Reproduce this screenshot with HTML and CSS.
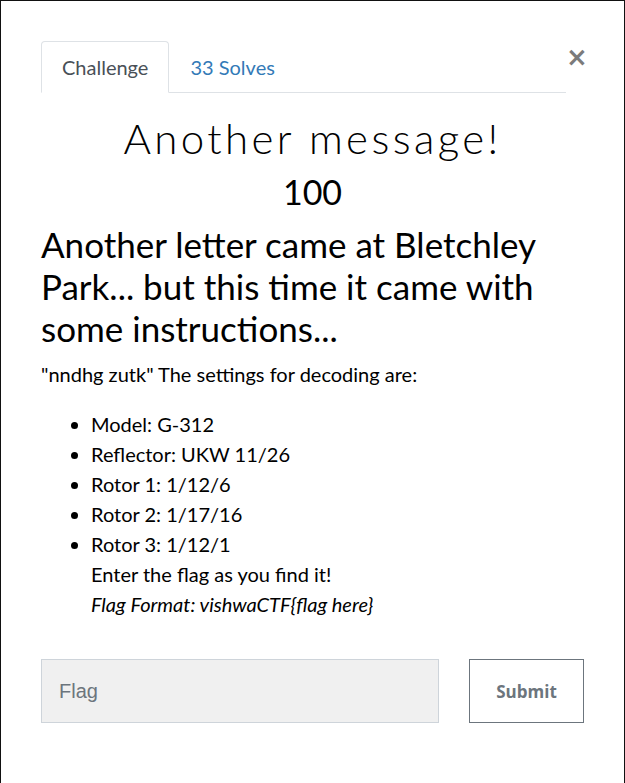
FILE: index.html
```html
<!DOCTYPE html>
<html>
<head>
<meta charset="utf-8">
<link rel="stylesheet" href="styles.css">
</head>
<body>
<div class="modal">
  <div class="header">
    <nav class="tabs">
      <a class="tab active">Challenge</a>
      <a class="tab">33 Solves</a>
    </nav>
    <span class="close">&times;</span>
  </div>
  <h2 class="title">Another message!</h2>
  <h3 class="value">100</h3>
  <h1 class="desc-head">Another letter came at Bletchley Park... but this time it came with some instructions...</h1>
  <p class="desc">"nndhg zutk" The settings for decoding are:</p>
  <ul class="settings">
    <li>Model: G-312</li>
    <li>Reflector: UKW 11/26</li>
    <li>Rotor 1: 1/12/6</li>
    <li>Rotor 2: 1/17/16</li>
    <li>Rotor 3: 1/12/1</li>
    <li class="plain">Enter the flag as you find it!</li>
    <li class="plain"><em>Flag Format: vishwaCTF{flag here}</em></li>
  </ul>
  <form class="submit-row">
    <input class="flag" type="text" placeholder="Flag">
    <button class="btn" type="button">Submit</button>
  </form>
</div>
</body>
</html>
```

FILE: styles.css
```css
html, body {
  margin: 0;
  padding: 0;
  background: #fff;
}
.modal {
  box-sizing: border-box;
  width: 625px;
  height: 783px;
  border-top: 1px solid #111;
  border-left: 1px solid #111;
  border-right: 1px solid #111;
  padding: 40px 40px 0 40px;
  font-family: "Lato", "Noto Sans", sans-serif;
  color: #000;
  display: flex;
  flex-direction: column;
}
.header {
  display: flex;
  align-items: flex-start;
}
.tabs {
  flex: 1;
  display: flex;
  border-bottom: 1px solid #dee2e6;
  margin-right: 0;
}
.tab {
  font-size: 20px;
  line-height: 26px;
  padding: 12px 20px 12px 20px;
  border: 1px solid transparent;
  border-radius: 4px 4px 0 0;
  margin-bottom: -1px;
  color: #337ab7;
}
.tab.active {
  color: #495057;
  border-color: #dee2e6 #dee2e6 #fff;
  background: #fff;
}
.close {
  font-family: "DejaVu Sans", sans-serif;
  font-weight: bold;
  font-size: 26px;
  line-height: 26px;
  color: #7b7b7b;
  margin-top: 3px;
  margin-right: 2px;
  width: 16px;
  text-align: center;
}
.title {
  margin: 20px 0 0 0;
  text-align: center;
  font-weight: 300;
  font-size: 42px;
  line-height: 50px;
  letter-spacing: 3.4px;
}
.value {
  margin: 9px 0 0 0;
  text-align: center;
  font-weight: 400;
  font-size: 34px;
  line-height: 40px;
}
.desc-head {
  margin: 11px 0 0 0;
  font-weight: 400;
  font-size: 35px;
  line-height: 42px;
}
.desc {
  margin: 10px 0 0 0;
  font-size: 20px;
  line-height: 30px;
}
.settings {
  margin: 20px 0 0 0;
  padding-left: 50px;
  font-size: 20px;
  line-height: 30px;
}
.settings li.plain {
  list-style: none;
}
.submit-row {
  margin-top: 40px;
  display: grid;
  grid-template-columns: 1fr 115px;
  column-gap: 30px;
}
.flag {
  box-sizing: border-box;
  height: 64px;
  background: #f0f0f0;
  border: 1px solid #ced4da;
  padding: 0 17px;
  font-family: "Liberation Sans", Arial, sans-serif;
  font-size: 20px;
  color: #495057;
  outline: none;
}
.flag::placeholder {
  color: #6c757d;
}
.btn {
  box-sizing: border-box;
  height: 64px;
  background: #fff;
  border: 1px solid #6c757d;
  color: #6c757d;
  font-family: "Open Sans", sans-serif;
  font-weight: 700;
  font-size: 17px;
  padding: 0;
}
```
